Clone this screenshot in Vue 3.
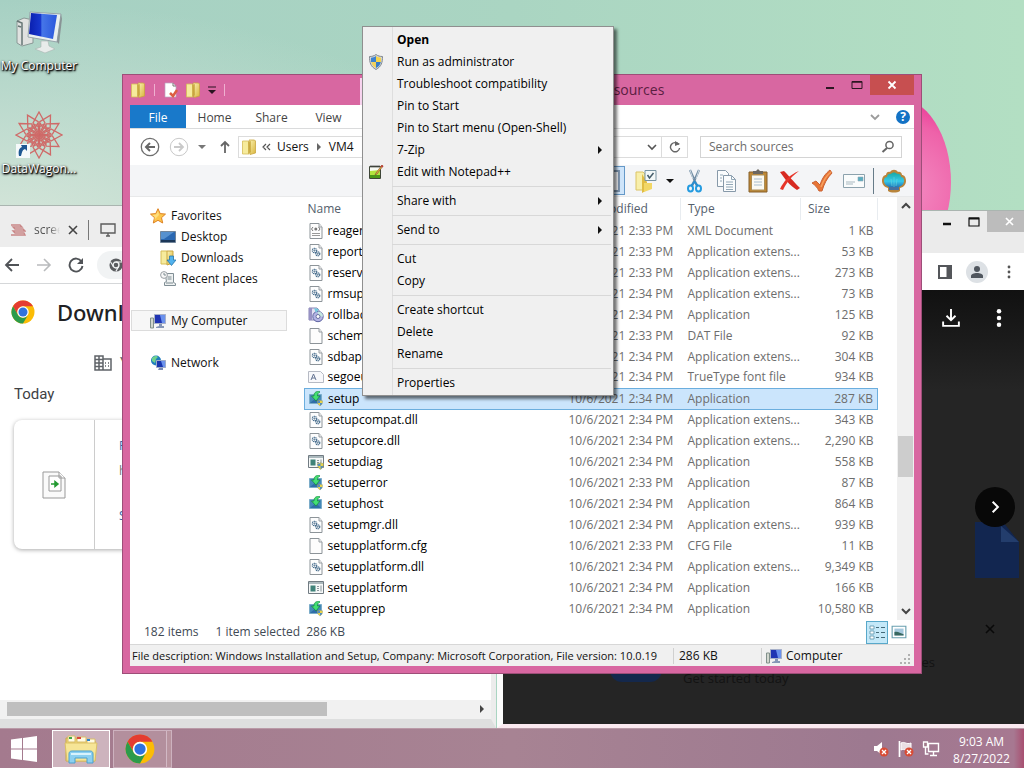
<script setup>
const files = [
  ['xml', 'reagent.xml', '10/6/2021 2:33 PM', 'XML Document', '1 KB'],
  ['dll', 'reportgen.dll', '10/6/2021 2:33 PM', 'Application extens...', '53 KB'],
  ['dll', 'reserve.dll', '10/6/2021 2:33 PM', 'Application extens...', '273 KB'],
  ['dll', 'rmsupport.dll', '10/6/2021 2:34 PM', 'Application extens...', '73 KB'],
  ['disc', 'rollback', '10/6/2021 2:34 PM', 'Application', '125 KB'],
  ['blank', 'schema.dat', '10/6/2021 2:33 PM', 'DAT File', '92 KB'],
  ['dll', 'sdbapi.dll', '10/6/2021 2:34 PM', 'Application extens...', '304 KB'],
  ['ttf', 'segoeui.ttf', '10/6/2021 2:34 PM', 'TrueType font file', '934 KB'],
  ['setup', 'setup', '10/6/2021 2:34 PM', 'Application', '287 KB'],
  ['dll', 'setupcompat.dll', '10/6/2021 2:34 PM', 'Application extens...', '343 KB'],
  ['dll', 'setupcore.dll', '10/6/2021 2:34 PM', 'Application extens...', '2,290 KB'],
  ['diag', 'setupdiag', '10/6/2021 2:34 PM', 'Application', '558 KB'],
  ['setup', 'setuperror', '10/6/2021 2:33 PM', 'Application', '87 KB'],
  ['host', 'setuphost', '10/6/2021 2:34 PM', 'Application', '864 KB'],
  ['dll', 'setupmgr.dll', '10/6/2021 2:34 PM', 'Application extens...', '939 KB'],
  ['blank', 'setupplatform.cfg', '10/6/2021 2:33 PM', 'CFG File', '11 KB'],
  ['dll', 'setupplatform.dll', '10/6/2021 2:34 PM', 'Application extens...', '9,349 KB'],
  ['app', 'setupplatform', '10/6/2021 2:34 PM', 'Application', '166 KB'],
  ['setup', 'setupprep', '10/6/2021 2:34 PM', 'Application', '10,580 KB']
]

const menu = [
  [
    { label: 'Open', bold: true },
    { label: 'Run as administrator', icon: 'shield' },
    { label: 'Troubleshoot compatibility' },
    { label: 'Pin to Start' },
    { label: 'Pin to Start menu (Open-Shell)' },
    { label: '7-Zip', sub: true },
    { label: 'Edit with Notepad++', icon: 'notepad' }
  ],
  [{ label: 'Share with', sub: true }],
  [{ label: 'Send to', sub: true }],
  [{ label: 'Cut' }, { label: 'Copy' }],
  [{ label: 'Create shortcut' }, { label: 'Delete' }, { label: 'Rename' }],
  [{ label: 'Properties' }]
]

const tools = [
  ['scissors', 'Cut'],
  ['copy', 'Copy'],
  ['paste', 'Paste'],
  ['cross', 'Delete'],
  ['tick', 'Rename'],
  ['mail', 'Send']
]
const petals = [0, 30, 60, 90, 120, 150, 180, 210, 240, 270, 300, 330]
</script>

<template>
  <svg class="defs" aria-hidden="true">
    <defs>
      <linearGradient id="gFold" x1="0" x2="1" y1="0" y2="1"><stop offset="0" stop-color="#fbf3b4" /><stop offset="1" stop-color="#d9b53c" /></linearGradient>
      <linearGradient id="gScreen" x1="0" x2="1"><stop offset="0" stop-color="#0a1fae" /><stop offset=".42" stop-color="#1838cf" /><stop offset=".46" stop-color="#4676e8" /><stop offset="1" stop-color="#2a57dc" /></linearGradient>
      <linearGradient id="gShell" x1="0" x2="0" y1="0" y2="1"><stop offset="0" stop-color="#18a9a4" /><stop offset=".6" stop-color="#35c9ea" /><stop offset="1" stop-color="#2377b8" /></linearGradient>
    </defs>
    <symbol id="i-folder" viewBox="0 0 16 16">
      <path d="M1.500 2H7l1 1v12H1.500z" fill="#f6eb9c" stroke="#d6bd58" stroke-width=".8" />
      <path d="M8 1h5.500l1 1v12L9 15.500z" fill="url(#gFold)" stroke="#c9a640" stroke-width=".8" />
      <path d="M7 3v12l3-2V2z" fill="#c5a437" opacity=".7" />
    </symbol>
    <symbol id="i-folderwide" viewBox="0 0 22 24">
      <path d="M1 3h7l2 2v16H1z" fill="#f8efab" stroke="#dbc467" />
      <path d="M7 5l5 8v8l-5 3z" fill="#e1bd43" /><path d="M9 14h8v6l-8 3z" fill="#f2d766" />
      <path d="M10 1.500h11v10H10z" fill="#f3f8f8" stroke="#7894a2" />
      <path d="M12.500 6l2 3 4-5" fill="none" stroke="#455d6a" stroke-width="1.500" />
    </symbol>
    <symbol id="i-newdoc" viewBox="0 0 16 16">
      <path d="M2 1h8l3 3v11H2z" fill="#fff" stroke="#b9a7c0" stroke-width=".7" /><path d="M10 1v3h3" fill="none" stroke="#777" /><path d="M7 11l3 3 4-6" fill="none" stroke="#dd5d42" stroke-width="2.500" />
    </symbol>
    <symbol id="i-blank" viewBox="0 0 16 16"><path d="M2 .5h9L14 4v11.500H2z" fill="#fdfdfd" stroke="#8d9499" /><path d="M11 .5V4h3" fill="#eee" stroke="#9aa0a5" /></symbol>
    <symbol id="i-xml" viewBox="0 0 16 16"><use href="#i-blank" /><path d="M5 4L3.500 6 5 8M10.500 4L12 6l-1.500 2" fill="none" stroke="#777" /><circle cx="7.800" cy="6" r="1.500" fill="#777" /><path d="M4 10.500h8M4 12.500h8" stroke="#999" /></symbol>
    <symbol id="i-dll" viewBox="0 0 16 16"><use href="#i-blank" /><g fill="none" stroke="#476d8d"><circle cx="6.500" cy="6.500" r="2.200" stroke-width="1.200" stroke-dasharray="1.200 .5" /><circle cx="6.500" cy="6.500" r=".6" /><circle cx="9.800" cy="9.800" r="2" stroke-width="1.200" stroke-dasharray="1.200 .5" /><circle cx="9.800" cy="9.800" r=".5" /></g></symbol>
    <symbol id="i-disc" viewBox="0 0 16 16"><path d="M1 1h8l2 2v10H1z" fill="#e2e0f2" stroke="#8682b4" /><path d="M1 1h3v12H1z" fill="#9792c4" /><circle cx="10" cy="9.500" r="5.200" fill="#b4b4e4" stroke="#5f65a2" /><path d="M10 4.500a5 5 0 0 1 5 5h-5z" fill="#c3e7df" /><circle cx="10" cy="9.500" r="2" fill="#fff" stroke="#6870a2" /><path d="M6 1l5 1-3 4z" fill="#76c8dc" /></symbol>
    <symbol id="i-ttf" viewBox="0 0 16 16"><path d="M.5 2.500h12l3 3v8H.5z" fill="#f8f8fb" stroke="#b6bac4" /><path d="M3 11l2.500-6L8 11M4 9h3" fill="none" stroke="#657492" /></symbol>
    <symbol id="i-minishield" viewBox="0 0 8 8"><path d="M4 0C3 1 2 1 .5 1c0 3 .5 5 3.500 7C7 6 7.500 4 7.500 1 6 1 5 1 4 0z" fill="#e9d44a" stroke="#898d70" stroke-width=".5" /><path d="M4 .5C3 1.300 2 1.400 1 1.500V4h3zM4 4h3C6.500 6 5.500 6.800 4 7.500z" fill="#528dbf" /></symbol>
    <symbol id="i-host" viewBox="0 0 16 16"><path d="M1.500 3.500h12v9h-12z" fill="#4689b9" stroke="#7bacc9" /><path d="M2 12h11L8 7z" fill="#2f6ea8" /><path d="M10.500 0C7 1 6 2 6 5H3.500L8 10l4-5H9.500c0-2 .4-3 2.500-4z" fill="#43df74" stroke="#16843c" stroke-width=".7" /></symbol>
    <symbol id="i-setup" viewBox="0 0 16 16"><use href="#i-host" /><use href="#i-minishield" x="9" y="8" width="6" height="8" /></symbol>
    <symbol id="i-app" viewBox="0 0 16 16"><path d="M.5 1.500h15v12H.5z" fill="#f6f8f8" stroke="#717b82" /><path d="M1 2h14v2H1z" fill="#abb9bd" /><path d="M2.500 5.500h5v6h-5z" fill="#3f8279" /><path d="M9 6.500h2M9 8.500h2M9 10.500h2M13 5.500v6" stroke="#8b979d" /></symbol>
    <symbol id="i-diag" viewBox="0 0 16 16"><use href="#i-app" /><use href="#i-minishield" x="9" y="8" width="7" height="8" /></symbol>
    <symbol id="i-shield" viewBox="0 0 16 16"><path d="M8 .5C6 2 4 2.500 1.500 2.500c0 6 1 10 6.500 13 5.500-3 6.500-7 6.500-13C12 2.500 10 2 8 .5z" fill="#d4d8da" stroke="#828990" /><path d="M8 2C6.500 3 5 3.500 3 3.700V8h5z" fill="#3c82cf" /><path d="M8 2c1.500 1 3 1.500 5 1.700V8H8z" fill="#f5d44b" /><path d="M3.200 8H8v6c-3-1.500-4.300-3.500-4.800-6z" fill="#f2d15d" /><path d="M12.800 8H8v6c3-1.500 4.300-3.500 4.800-6z" fill="#397cc6" /></symbol>
    <symbol id="i-notepad" viewBox="0 0 16 16"><path d="M1.500 2.500h11v12h-11z" fill="#f8fbf3" stroke="#3e4638" /><path d="M2 7l10-1v8H2z" fill="#b3e43e" /><path d="M2 11h10v3H2z" fill="#4b9818" /><path d="M3 1v3M5 1v3M7 1v3M9 1v3M11 1v3" stroke="#444" stroke-width=".7" /><path d="M14 1L8 9l-1 2 2-1 6-8z" fill="#eab046" stroke="#7a4a29" stroke-width=".6" /><path d="M13.500 1l2 1-1 1.400-2-1z" fill="#bf3f3c" /></symbol>
    <symbol id="i-pc" viewBox="0 0 48 44"><path d="M2 11l7-3 9 2v23L7 36l-5-3z" fill="#e0e2e0" stroke="#8a9896" /><path d="M2 11l5 2v22M3 16l3 1" fill="none" stroke="#667775" stroke-width="1.500" /><path d="M15 2l31 2-4 28-29-5z" fill="#e9efef" stroke="#97a5aa" /><path d="M16 3l26 2-4 24-24-5z" fill="url(#gScreen)" /><path d="M26 31h7l1 5 6 3-10 4-10-4 6-2z" fill="#e8ecea" stroke="#a9b6b2" stroke-width=".6" /><path d="M42 32l4-28 1 5-3 25z" fill="#899496" /></symbol>
    <symbol id="i-smallpc" viewBox="0 0 16 16"><path d="M.5 5h3v10h-3z" fill="#d2d7ce" stroke="#81908b" /><path d="M4.500 1.500h11v9h-11z" fill="#1f34b3" stroke="#a7b0c9" /><path d="M10 2h5v8h-3z" fill="#6a91ed" /><path d="M9 11h3v2h2v2H6v-1l3-1z" fill="#8596b6" /></symbol>
    <symbol id="i-star" viewBox="0 0 16 16"><path d="M8 .7l2.200 4.900 5.300.5-4 3.600 1.200 5.300L8 12.300 3.300 15l1.200-5.300-4-3.600 5.300-.5z" fill="#fdc64b" stroke="#de8223" /><path d="M8 3l1 4-5 5 1-3-3-2 4-.500z" fill="#ffe388" opacity=".8" /></symbol>
    <symbol id="i-desk" viewBox="0 0 16 16"><path d="M.5 2.500h15v11H.5z" fill="#2a68b2" stroke="#71859a" /><path d="M1 3h13L4 10H1z" fill="#6aa3db" opacity=".7" /><path d="M1 12h14" stroke="#1b3758" stroke-width="2" /></symbol>
    <symbol id="i-down" viewBox="0 0 16 16"><path d="M1 1h6l1 1v12H1z" fill="#f6eb9c" stroke="#d6bd58" /><path d="M7 1h6v12l-6 2z" fill="url(#gFold)" stroke="#c9a640" /><path d="M9.500 6h4v4H16l-4.500 5.500L7 10h2.500z" fill="#51b2ee" stroke="#2676ac" stroke-width=".8" /></symbol>
    <symbol id="i-recent" viewBox="0 0 16 16"><path d="M5 2.500h8.500v9l2 1v2h-11v-3l2-1z" fill="#eef1f1" stroke="#808e95" /><circle cx="4" cy="4" r="3.400" fill="#f7f7f7" stroke="#999fa4" /><path d="M4 2v2h2M7.500 6h4M7.500 8h4M6 12h7" fill="none" stroke="#7d8b91" /></symbol>
    <symbol id="i-net" viewBox="0 0 16 16"><circle cx="6" cy="5.500" r="5" fill="#1f7dbd" /><path d="M2 3c3-3 5-2 6-1L6 4 5 8 2 6z" fill="#6fd18d" /><path d="M6.500 5.500h9v7h-9z" fill="#1835ae" stroke="#9dabc8" /><path d="M11 6h4v6h-2z" fill="#6c93ed" /><path d="M9 13h4v2H8z" fill="#7b8cb4" /></symbol>
    <symbol id="i-chrome" viewBox="0 0 48 48"><circle cx="24" cy="24" r="23" fill="#fbbc05" /><path d="M4.080 12.500A23 23 0 0 1 43.920 12.500H24A11.500 11.500 0 0 0 14.040 29.750z" fill="#e43c32" /><path d="M4.080 12.500A23 23 0 0 0 24 47l9.960-17.250A11.500 11.500 0 0 1 14.040 29.750z" fill="#2c9b4b" /><circle cx="24" cy="24" r="11.500" fill="#fff" /><circle cx="24" cy="24" r="9" fill="#2f72de" /></symbol>
    <symbol id="i-scissors" viewBox="0 0 24 24"><path d="M8 1l7 16M17 1l-7 16" stroke="#728da4" stroke-width="2.200" /><path d="M8 1l3 9M17 1l-3 9" stroke="#cad7df" /><g fill="none" stroke="#249be0" stroke-width="2"><ellipse cx="8.500" cy="19.500" rx="2.500" ry="3" /><ellipse cx="16.500" cy="19.500" rx="2.500" ry="3" /></g><path d="M12 12l4 5M13 12l-4 5" stroke="#2a8ed0" stroke-width="2" /></symbol>
    <symbol id="i-copy" viewBox="0 0 24 24"><g fill="#fafcfd" stroke="#8799a9"><path d="M3.500 1.500h8l3 3v13h-11z" /><path d="M9.500 6.500h8l4 4v12h-12z" /></g><path d="M17.500 6.500v4h4M6 6h3M6 9h2M6 12h2M12 13h7M12 15.500h7M12 18h7M12 20.500h7" fill="none" stroke="#93a8b7" /></symbol>
    <symbol id="i-paste" viewBox="0 0 24 24"><path d="M3 3h18v20H3z" fill="#c08834" stroke="#85602c" /><path d="M5.500 6h13v15h-13z" fill="#fbfaf3" stroke="#a98d56" /><path d="M7 5h10V2h-3l-2-2-2 2H7z" fill="#6d6860" /><path d="M8 10h8M8 13h8M8 16h8" stroke="#a7bdce" /></symbol>
    <symbol id="i-cross" viewBox="0 0 24 24"><path d="M2 3l4-1c4 4 9 10 16 17l-3 2C11 16 7 10 2 3z" fill="#d72a21" /><path d="M21 2c-7 5-12 11-16 19l-3-1C6 12 11 6 21 2z" fill="#e7352a" /></symbol>
    <symbol id="i-tick" viewBox="0 0 24 24"><path d="M2 14l4-2 4 4C12 9 16 4 20 1l2 3c-5 5-8 11-10 18H9C7 18 5 16 2 14z" fill="#e87536" stroke="#ca6232" /><path d="M11 18C14 10 17 6 21 3" fill="none" stroke="#f6a160" stroke-width="1.500" /></symbol>
    <symbol id="i-mail" viewBox="0 0 24 24"><path d="M1.500 5.500h21v13h-21z" fill="#fafcfc" stroke="#8ca2ad" /><path d="M16 8h5v4h-5z" fill="#59aec0" stroke="#91a5b5" stroke-width=".6" /><path d="M4 13h9M4 15h7" stroke="#a8b8c0" /></symbol>
    <symbol id="i-shell" viewBox="0 0 24 24"><path d="M6 19C2 18 0 15 0 12c0-4 2-6 4-6 0-3 3-4 4-3 2-3 6-3 8 0 2-1 4 1 4 3 2 0 4 2 4 6 0 3-2 6-6 7v3c-3 2-9 2-12 0z" fill="#b8843b" /><path d="M7 18c-3-1-5-3-5-6s1-4 3-4c0-2 2-4 4-3 1-2 5-2 6 0 2-1 4 1 4 3 2 0 3 1 3 4s-2 5-5 6z" fill="url(#gShell)" /><path d="M12 18V8M10 17L9 10M14 17l1-7" stroke="#67d5db" stroke-width=".6" /><path d="M7 18h10v3H7z" fill="#4770a0" /></symbol>
    <symbol id="i-pages" viewBox="0 0 24 24"><path d="M1 2h20v20H1z" fill="#fafcff" stroke="#7e96b0" stroke-width="2" /><path d="M15 5v15" stroke="#7e96b0" /></symbol>
  </svg>

  <main class="screen">
    <section class="desktop">
      <div class="flower"></div>

      <nav class="shortcuts" aria-label="Desktop icons">
        <a href="#" class="shortcut">
          <svg class="sc-art" viewBox="0 0 48 44"><use href="#i-pc" /></svg>
          <span>My Computer</span>
        </a>
        <a href="#" class="shortcut">
          <svg class="sc-art" viewBox="0 0 48 48">
            <g fill="none" stroke="#cf6a68" stroke-width="1.300">
              <path v-for="p in petals" :key="p" d="M24 1l6 11-6 11-6-11zM24 16l5-3M24 16l-5-3" :transform="'rotate(' + p + ' 24 24)'" />
              <circle cx="24" cy="24" r="6" stroke-dasharray="2 1" />
            </g>
            <path d="M1 33h14v14H1z" fill="#f5f9fa" /><path d="M4 45c-1-5 0-8 3-9l-1-2 6 0 0 6-2-2c-3 1-3 4-4 7z" fill="#1d5792" />
          </svg>
          <span>DataWagon...</span>
        </a>
      </nav>

      <section class="browser left" aria-label="Downloads browser">
        <div class="b-tabs">
          <svg class="fav" viewBox="0 0 16 14"><path d="M1 2h9l2 2H3l2 2h8l2 2H3l2 2h9l1 2H1" fill="none" stroke="#c98787" stroke-width="1.300" /></svg>
          <span class="tabname">scree</span>
          <button aria-label="Close tab"><svg viewBox="0 0 12 12"><path d="M2 2l8 8M10 2l-8 8" stroke="#444" stroke-width="1.600" /></svg></button>
          <i class="tabsep"></i>
          <svg class="mon" viewBox="0 0 16 16"><path d="M1 2h14v9H1zM8 11v3M6 14h4" fill="none" stroke="#5c5c5c" stroke-width="1.400" /></svg>
        </div>
        <div class="b-bar">
          <button aria-label="Back"><svg viewBox="0 0 16 16"><path d="M15 8H2M8 2L2 8l6 6" fill="none" stroke="#505357" stroke-width="1.800" /></svg></button>
          <button aria-label="Forward"><svg viewBox="0 0 16 16"><path d="M1 8h13M8 2l6 6-6 6" fill="none" stroke="#b9bbbd" stroke-width="1.600" /></svg></button>
          <button aria-label="Reload"><svg viewBox="0 0 16 16"><path d="M13.500 4.500A6.500 6.500 0 1 0 14.500 9" fill="none" stroke="#505357" stroke-width="1.900" /><path d="M15 1v6H9z" fill="#505357" /></svg></button>
          <div class="omni"><svg viewBox="0 0 16 16"><circle cx="8" cy="8" r="7.500" fill="#5b5d60" /><circle cx="8" cy="8" r="3.400" fill="#5b5d60" stroke="#f1f3f4" stroke-width="1.600" /><path d="M8 4.600h7M5 9.700L1.500 4M11 9.700L8 15" stroke="#f1f3f4" stroke-width="1.300" /></svg></div>
        </div>
        <div class="b-page">
          <h1><svg viewBox="0 0 48 48"><use href="#i-chrome" /></svg>Downloads</h1>
          <p class="managed"><svg viewBox="0 0 18 16"><path d="M1 1h8v14H1zM9 4h8v11H9" fill="none" stroke="#5f6368" stroke-width="1.500" /><path d="M1 4.500h8M1 8h8M1 11.500h8M5 1v14M11 8h1M14 8h1M11 11h1M14 11h1" stroke="#5f6368" stroke-width="1.500" /></svg>Your browser</p>
          <h2>Today</h2>
          <article class="card">
            <div class="thumb"><svg viewBox="0 0 24 28"><path d="M1 1h16l6 6v20H1z" fill="#fafafa" stroke="#999" /><path d="M17 1v6h6M7 5h12v15H7z" fill="#fff" stroke="#9a9a9a" /><path d="M9 13h5M13 10.500l3 2.500-3 2.500z" stroke="#239a32" stroke-width="1.500" fill="#239a32" /></svg></div>
            <div class="dl"><a href="#">Files</a><span>https</span><a href="#">Show</a></div>
          </article>
        </div>
        <div class="hscroll"><div class="hthumb"></div><svg viewBox="0 0 8 8"><path d="M2 0l4 4-4 4z" fill="#444" /></svg></div>
      </section>

      <section class="browser right" aria-label="Image viewer browser">
        <div class="r-title">
          <button aria-label="Minimize"><svg viewBox="0 0 12 12"><path d="M2 8h8" stroke="#111" stroke-width="2.500" /></svg></button>
          <button aria-label="Maximize"><svg viewBox="0 0 12 12"><path d="M1 2h10v8H1z" fill="none" stroke="#111" stroke-width="1.200" /><path d="M1 2.500h10" stroke="#111" stroke-width="2" /></svg></button>
          <button class="gray" aria-label="Close"><svg viewBox="0 0 12 12"><path d="M2 2l7 7M9 2L2 9" stroke="#fff" stroke-width="1.700" /></svg></button>
        </div>
        <div class="r-bar">
          <svg viewBox="0 0 16 16"><path d="M2 2h12v12H2z" fill="none" stroke="#54565a" stroke-width="2" /><path d="M9.500 2H14v12H9.500z" fill="#54565a" /></svg>
          <span class="avatar"><svg viewBox="0 0 16 16"><circle cx="8" cy="5" r="3" fill="#50565e" /><path d="M2 14v-2c0-4 12-4 12 0v2z" fill="#50565e" /></svg></span>
          <svg viewBox="0 0 16 16"><circle cx="8" cy="3" r="1.400" fill="#555" /><circle cx="8" cy="8" r="1.400" fill="#555" /><circle cx="8" cy="13" r="1.400" fill="#555" /></svg>
        </div>
        <div class="r-view">
          <div class="r-acts">
            <svg viewBox="0 0 16 16"><path d="M8 0v9M4 6l4 4 4-4M1 11v4h14v-4" fill="none" stroke="#fff" stroke-width="1.700" /></svg>
            <svg viewBox="0 0 16 16"><circle cx="8" cy="2" r="2" fill="#fff" /><circle cx="8" cy="8" r="2" fill="#fff" /><circle cx="8" cy="14" r="2" fill="#fff" /></svg>
          </div>
          <svg class="r-doc" viewBox="0 0 44 56"><path d="M0 0h28l16 20v36H0z" fill="#122650" /><path d="M26 4l18 16H26z" fill="#233d6c" /></svg>
          <button class="next" aria-label="Next"><svg viewBox="0 0 12 12"><path d="M4 1.500l4.500 4.500L4 10.500" fill="none" stroke="#fff" stroke-width="1.700" /></svg></button>
          <svg class="r-x" viewBox="0 0 10 10"><path d="M1 1l8 8M9 1L1 9" stroke="#090909" stroke-width="1.600" /></svg>
          <div class="pill"></div>
          <div class="promo"><p>files</p><p>Get started today</p></div>
        </div>
      </section>

      <section class="explorer" aria-label="sources">
        <header class="titlebar">
          <div class="quick">
            <svg viewBox="0 0 16 16"><use href="#i-folder" /></svg><i></i>
            <button aria-label="Properties"><svg viewBox="0 0 16 16"><use href="#i-newdoc" /></svg></button>
            <button aria-label="New folder"><svg viewBox="0 0 16 16"><use href="#i-folder" /></svg></button>
            <button class="qdrop" aria-label="Customize"><svg viewBox="0 0 8 8"><path d="M0 1h8" stroke="#291321" /><path d="M0 4h8L4 8z" fill="#291321" /></svg></button><i></i>
          </div>
          <div class="ctxtab"></div>
          <span class="title">sources</span>
          <div class="wbtns">
            <button aria-label="Minimize"><svg viewBox="0 0 12 12"><path d="M2 9h8" stroke="#2d1722" stroke-width="2" /></svg></button>
            <button aria-label="Maximize"><svg viewBox="0 0 12 12"><path d="M1 2.500h10v7H1z" fill="none" stroke="#2d1722" /><path d="M1 3h10" stroke="#2d1722" stroke-width="1.500" /></svg></button>
            <button class="close" aria-label="Close"><svg viewBox="0 0 12 12"><path d="M2.500 2.500l7 7M9.500 2.500l-7 7" stroke="#fff" stroke-width="1.800" /></svg></button>
          </div>
        </header>
        <div class="inner">
          <div class="ribbon">
            <button class="file">File</button><button>Home</button><button>Share</button><button>View</button>
            <div class="rhelp">
              <svg viewBox="0 0 10 10"><path d="M1 3l4 4 4-4" fill="none" stroke="#9b9b9b" stroke-width="1.800" /></svg>
              <button class="help" aria-label="Help">?</button>
            </div>
          </div>
          <div class="address">
            <button aria-label="Back" class="nav"><svg viewBox="0 0 20 20"><circle cx="10" cy="10" r="8.700" fill="none" stroke="#6e6e6e" stroke-width="1.300" /><path d="M15 10H6M10 6l-4 4 4 4" fill="none" stroke="#666" stroke-width="2" /></svg></button>
            <button aria-label="Forward" class="nav"><svg viewBox="0 0 20 20"><circle cx="10" cy="10" r="8.700" fill="none" stroke="#c9c9c9" /><path d="M5 10h9M10 6l4 4-4 4" fill="none" stroke="#c9c9c9" stroke-width="1.800" /></svg></button>
            <svg class="navdrop" viewBox="0 0 8 8"><path d="M0 2h8L4 6z" fill="#777" /></svg>
            <button aria-label="Up" class="up"><svg viewBox="0 0 14 14"><path d="M7 13V2M3 6l4-4 4 4" fill="none" stroke="#666" stroke-width="1.800" /></svg></button>
            <div class="crumbs">
              <svg class="cf" viewBox="0 0 16 16"><use href="#i-folder" /></svg>
              <svg class="dbl" viewBox="0 0 10 10"><path d="M4 2L1 5l3 3M8 2L5 5l3 3" fill="none" stroke="#555" stroke-width="1.200" /></svg>
              <a href="#">Users</a>
              <svg class="tri" viewBox="0 0 6 8"><path d="M1 0l4 4-4 4z" fill="#666" /></svg>
              <a href="#">VM4</a>
              <svg class="chev" viewBox="0 0 10 10"><path d="M1 3l4 4 4-4" fill="none" stroke="#555" stroke-width="1.600" /></svg>
              <button class="refresh" aria-label="Refresh"><svg viewBox="0 0 12 12"><path d="M9.800 3.500A4.600 4.600 0 1 0 10.600 7" fill="none" stroke="#666" stroke-width="1.400" /><path d="M6 0l5 3-5 2z" fill="#666" /></svg></button>
            </div>
            <label class="search"><input type="text" placeholder="Search sources" aria-label="Search sources" /><svg viewBox="0 0 14 14"><circle cx="8.500" cy="5" r="3.600" fill="none" stroke="#666" stroke-width="1.500" /><path d="M6 8l-4.500 4" stroke="#666" stroke-width="2" /></svg></label>
          </div>
          <div class="toolbar">
            <button class="pane" aria-label="Navigation pane"><svg viewBox="0 0 24 24"><use href="#i-pages" /></svg></button>
            <button class="tool" aria-label="Options"><svg viewBox="0 0 22 24"><use href="#i-folderwide" /></svg></button>
            <svg class="tdrop" viewBox="0 0 8 8"><path d="M0 2h8L4 6z" fill="#111" /></svg>
            <button v-for="t in tools" :key="t[0]" class="tool" :aria-label="t[1]"><svg viewBox="0 0 24 24"><use :href="'#i-' + t[0]" /></svg></button>
            <i class="tsep"></i>
            <button class="tool" aria-label="Open-Shell"><svg viewBox="0 0 24 24"><use href="#i-shell" /></svg></button>
          </div>
          <div class="panes">
            <nav class="tree" aria-label="Folders">
              <a href="#"><svg viewBox="0 0 16 16"><use href="#i-star" /></svg>Favorites</a>
              <a href="#" class="kid"><svg viewBox="0 0 16 16"><use href="#i-desk" /></svg>Desktop</a>
              <a href="#" class="kid"><svg viewBox="0 0 16 16"><use href="#i-down" /></svg>Downloads</a>
              <a href="#" class="kid"><svg viewBox="0 0 16 16"><use href="#i-recent" /></svg>Recent places</a>
              <a href="#" class="group current"><svg viewBox="0 0 16 16"><use href="#i-smallpc" /></svg>My Computer</a>
              <a href="#" class="group"><svg viewBox="0 0 16 16"><use href="#i-net" /></svg>Network</a>
            </nav>
            <div class="list">
              <table>
                <colgroup><col /><col class="c-date" /><col class="c-type" /><col class="c-size" /></colgroup>
                <thead><tr><th>Name</th><th>Date modified</th><th>Type</th><th>Size</th></tr></thead>
                <tbody>
                  <tr v-for="f in files" :key="f[1]" :class="{ sel: f[1] === 'setup' }">
                    <td class="name"><div><svg viewBox="0 0 16 16"><use :href="'#i-' + f[0]" /></svg>{{ f[1] }}</div></td>
                    <td>{{ f[2] }}</td><td>{{ f[3] }}</td><td class="size">{{ f[4] }}</td>
                  </tr>
                </tbody>
              </table>
            </div>
            <div class="vscroll">
              <svg viewBox="0 0 10 10"><path d="M1 7l4-4 4 4" fill="none" stroke="#444" stroke-width="2" /></svg>
              <div class="track"><div class="vthumb"></div></div>
              <svg viewBox="0 0 10 10"><path d="M1 3l4 4 4-4" fill="none" stroke="#444" stroke-width="2" /></svg>
            </div>
          </div>
          <div class="status">
            <span class="count">182 items</span><span>1 item selected</span><span class="kb">286 KB</span>
            <div class="views">
              <button class="on" aria-label="Details"><svg viewBox="0 0 16 16"><path d="M1 2h4v3H1zM1 7h4v3H1zM1 12h4v3H1z" fill="#fff" stroke="#5a92a8" stroke-width=".8" /><path d="M7 3.500h3M12 3.500h4M7 8.500h3M12 8.500h4M7 13.500h3M12 13.500h4" stroke="#456a78" /></svg></button>
              <button aria-label="Thumbnails"><svg viewBox="0 0 14 14"><path d="M1 2h12v10H1z" fill="#fff" stroke="#69a0b0" /><path d="M3 4h8v6H3z" fill="#a5c8dd" /><path d="M3 7c3-1 5 1 8 2v1H3z" fill="#37675f" /></svg></button>
            </div>
          </div>
          <footer class="info">
            <span class="desc">File description: Windows Installation and Setup, Company: Microsoft Corporation, File version: 10.0.19</span>
            <span class="isize">286 KB</span>
            <span class="iloc"><svg viewBox="0 0 16 16"><use href="#i-smallpc" /></svg>Computer</span>
            <svg class="grip" viewBox="0 0 10 10"><path d="M8 0h2v2H8zM8 4h2v2H8zM8 8h2v2H8zM4 4h2v2H4zM4 8h2v2H4zM0 8h2v2H0z" fill="#b0b0b0" /></svg>
          </footer>
        </div>
      </section>

      <div class="menu" role="menu">
        <div v-for="(g, i) in menu" :key="i" class="mgroup">
          <button v-for="m in g" :key="m.label" role="menuitem" :class="{ bold: m.bold }">
            <span class="mi"><svg v-if="m.icon" viewBox="0 0 16 16"><use :href="'#i-' + m.icon" /></svg></span>
            <span class="ml">{{ m.label }}</span>
            <svg v-if="m.sub" class="marrow" viewBox="0 0 6 8"><path d="M1 0l4 4-4 4z" fill="#111" /></svg>
          </button>
        </div>
      </div>
    </section>

    <footer class="taskbar">
      <button class="start" aria-label="Start"><svg viewBox="0 0 28 28"><path d="M1 4.500l11-1.500v10.500H1zM13 3l14-2v12.500H13zM1 14.500h11V25L1 23.500zM13 14.500h14V27l-14-2z" fill="#fff" /></svg></button>
      <button class="task active" aria-label="File Explorer">
        <svg viewBox="0 0 34 30"><path d="M2 4h10l2 3h17v20H2z" fill="#eed672" stroke="#c9a64d" /><path d="M4 2h7v6H4zM13 3h9v5h-9zM23 5h8v5h-8z" fill="#fffbe3" stroke="#d9bd69" /><path d="M5 3h3v2H5z" fill="#3ca749" /><path d="M13 3h4v2h-4z" fill="#d9463a" /><path d="M23 5h3v2h-3z" fill="#2a85ce" /><path d="M1 9h32l-2 18H3z" fill="#f6e596" stroke="#dbc067" /><path d="M5 29V20c0-2 1-3 3-3h18c2 0 3 1 3 3v9h-6v-5H11v5z" fill="#8cd0f0" stroke="#4ba0cf" /><path d="M7 20h20" stroke="#d8f3fd" stroke-width="2" /></svg>
      </button>
      <button class="task stack" aria-label="Google Chrome"><svg viewBox="0 0 48 48"><use href="#i-chrome" /></svg></button>
      <div class="tray">
        <svg viewBox="0 0 18 18"><path d="M2 6h3l5-4v13l-5-4H2z" fill="#fff" /><circle cx="12" cy="12" r="4.500" fill="#d84c36" /><path d="M10 10l4 4M14 10l-4 4" stroke="#fff" stroke-width="1.300" /></svg>
        <svg viewBox="0 0 18 18"><path d="M2.500 1v16" stroke="#fff" stroke-width="1.700" /><path d="M4 3c4-2 5 2 10 0v7c-5 2-6-2-10 0z" fill="#eadfe4" stroke="#fff" /><circle cx="12" cy="12" r="4.500" fill="#d84c36" /><path d="M10 10l4 4M14 10l-4 4" stroke="#fff" stroke-width="1.300" /></svg>
        <svg viewBox="0 0 18 18"><path d="M6.500 3.500h10v8h-10zM11.500 12v3M8 15.500h7M3.500 7v7h3" fill="none" stroke="#fff" stroke-width="1.400" /><path d="M1.500 2h4v5h-4z" fill="#a27c8c" stroke="#fff" stroke-width="1.300" /></svg>
      </div>
      <time class="clock"><span>9:03 AM</span><span>8/27/2022</span></time>
    </footer>
  </main>
</template>

<style>
body { margin: 0; }
</style>

<style scoped>
.defs { position: absolute; width: 0; height: 0; }
.screen { height: 100vh; min-height: 768px; display: flex; flex-direction: column; overflow: hidden; font: 12px/16px "Open Sans", "Noto Sans", sans-serif; color: #111; }
.screen * { box-sizing: border-box; }
button { border: 0; background: none; padding: 0; margin: 0; font: inherit; color: inherit; display: flex; align-items: center; justify-content: center; }
a { color: inherit; text-decoration: none; }
svg { display: block; flex: none; }
.desktop { flex: 1; position: relative; overflow: hidden; background: radial-gradient(ellipse 520px 230px at 0 230px, #d6e6da 0, rgba(214, 230, 218, 0) 100%), linear-gradient(90deg, #a6d0c3, #aad5c2 50%, #b3dfc3); }
.flower { position: absolute; right: 73px; top: 97px; width: 110px; height: 170px; border-radius: 50%; background: radial-gradient(circle at 55% 55%, #f48fc4 0, #ee62a9 60%, #ec479d 75%, #f27ebb 100%); }
.shortcuts { position: absolute; left: 0; top: 8px; display: flex; flex-direction: column; gap: 37px; }
.shortcut { width: 78px; display: flex; flex-direction: column; align-items: center; gap: 2px; color: #fff; text-shadow: 1px 1px 2px #000, 0 1px 3px #000, 1px 1px 1px #222; white-space: nowrap; }
.shortcut svg { width: 48px; height: 48px; }

.browser { position: absolute; overflow: hidden; display: flex; flex-direction: column; }
.left { left: 0; top: 205px; bottom: 0; width: 496px; background: #fff; border-right: 5px solid #ececec; border-bottom: 9px solid #dedfdf; border-top: 1px solid #aab5b0; }
.b-tabs { height: 41px; flex: none; background: #ededed; display: flex; align-items: center; padding: 7px 0 0 10px; color: #555; }
.fav { width: 16px; height: 14px; }
.tabname { width: 26px; margin: 0 7px 0 8px; overflow: hidden; mask-image: linear-gradient(90deg, #000 60%, transparent); }
.b-tabs button svg { width: 12px; height: 12px; }
.tabsep { width: 1px; height: 20px; background: #777; margin: 0 11px 0 9px; }
.mon { width: 16px; height: 16px; }
.b-bar { height: 37px; flex: none; border-bottom: 1px solid #d5d7d9; display: flex; align-items: center; padding-left: 4px; gap: 16px; }
.b-bar svg { width: 16px; height: 16px; }
.omni { flex: 1; height: 28px; border-radius: 14px; background: #f1f3f4; display: flex; align-items: center; padding-left: 12px; margin-left: -3px; }
.omni svg { width: 14px; height: 14px; }
.b-page { flex: 1; overflow: hidden; }
.b-page h1 { margin: 11px 0 0 11px; font: 500 22px/34px "Noto Sans", sans-serif; display: flex; align-items: center; gap: 22px; color: #202124; }
.b-page h1 svg { width: 24px; height: 24px; }
.managed { margin: 24px 0 0 94px; height: 20px; font: 14px/20px Roboto, sans-serif; display: flex; align-items: center; gap: 8px; color: #5f6368; white-space: nowrap; }
.managed svg { width: 18px; height: 16px; }
.b-page h2 { font: 15px/20px Roboto, sans-serif; margin: 11px 0 16px 14px; color: #3e4144; }
.card { margin-left: 14px; margin-right: -20px; height: 129px; border-radius: 8px; background: #fff; display: flex; box-shadow: 0 1px 4px #aaa; }
.thumb { width: 81px; border-right: 1px solid #ccc; display: flex; align-items: center; justify-content: center; }
.thumb svg { width: 24px; height: 28px; }
.dl { padding: 18px 0 0 24px; display: flex; flex-direction: column; gap: 9px; color: #777; }
.dl a { color: #3767a8; }
.dl a:last-child { margin-top: 20px; }
.hscroll { height: 19px; flex: none; background: #f1f1f1; padding: 1px 5px 2px 7px; display: flex; justify-content: space-between; align-items: center; }
.hthumb { width: 320px; height: 14px; background: #bfbfbf; }
.hscroll svg { width: 8px; height: 8px; }

.right { left: 497px; right: 0; top: 210px; bottom: 0; background: #f5f2f3; border-bottom: 4px solid #fbe9f0; border-left: 6px solid #fbfbfb; border-top: 1px solid #aab5b0; }
.r-title { height: 42px; background: #ebebeb; display: flex; justify-content: flex-end; align-items: flex-start; }
.r-title button { width: 27px; height: 21px; }
.r-title svg { width: 12px; height: 12px; }
.r-title .gray { width: 37px; background: #bcbcbc; padding-left: 9px; }
.r-bar { height: 37px; background: #fff; display: flex; justify-content: flex-end; align-items: center; gap: 13px; padding-right: 7px; }
.r-bar svg { width: 16px; height: 16px; }
.avatar { width: 22px; height: 22px; border-radius: 50%; background: #dde1e5; display: flex; align-items: center; justify-content: center; }
.r-view { flex: 1; position: relative; background: linear-gradient(#111, #252525 100px); }
.r-acts { display: flex; justify-content: flex-end; gap: 30px; padding: 19px 16px 0 0; }
.r-acts svg { width: 18px; height: 18px; }
.r-doc { position: absolute; right: 5px; top: 232px; width: 44px; height: 56px; }
.next { position: absolute; right: 9px; top: 197px; width: 40px; height: 40px; border-radius: 50%; background: #080808; }
.next svg { width: 14px; height: 14px; }
.r-x { position: absolute; right: 29px; top: 334px; width: 10px; height: 10px; }
.promo { position: absolute; left: 180px; right: 89px; top: 364px; color: #131313; font: 13px/16px "Open Sans", sans-serif; }
.promo p { margin: 0; }
.promo p:first-child { text-align: right; }
.pill { position: absolute; left: 107px; top: 352px; width: 52px; height: 40px; border-radius: 12px; background: #14284c; }

.explorer { position: absolute; left: 122px; right: 102px; top: 74px; bottom: 54px; background: #d867a1; border: 1px solid #9d4e78; padding: 0 7px 7px 7px; display: flex; flex-direction: column; overflow: hidden; }
.titlebar { height: 30px; flex: none; display: flex; align-items: flex-start; }
.quick { width: 230px; display: flex; align-items: center; height: 30px; }
.quick svg { width: 16px; height: 16px; }
.quick i { width: 1px; height: 12px; background: #efb0d0; margin: 0 8px 0 8px; }
.quick button + button { margin-left: 6px; }
.quick .qdrop svg { width: 8px; height: 8px; }
.quick .qdrop { margin-left: 7px; }
.ctxtab { width: 102px; height: 27px; margin-top: 3px; background: #f8d4ef; }
.title { flex: 1; text-align: center; font-size: 14px; line-height: 30px; color: #5a1e41; }
.wbtns { display: flex; }
.wbtns button { width: 27px; height: 20px; }
.wbtns svg { width: 12px; height: 12px; }
.wbtns .close { width: 44px; background: #c74f50; }
.inner { flex: 1; min-height: 0; background: #fff; display: flex; flex-direction: column; }
.ribbon { height: 24px; flex: none; display: flex; border-bottom: 1px solid #dadbdc; color: #444; }
.ribbon > button { width: 57px; padding-top: 2px; }
.ribbon .file { width: 56px; background: #1979ca; color: #fff; }
.rhelp { margin-left: auto; display: flex; align-items: center; gap: 16px; padding-right: 4px; }
.rhelp svg { width: 10px; height: 10px; }
.help { width: 14px; height: 14px; border-radius: 50%; background: #1372c5; color: #fff; font-weight: 700; }
.address { height: 36px; flex: none; display: flex; align-items: center; padding: 0 12px 0 10px; }
.nav { margin-right: 9px; }
.nav svg { width: 20px; height: 20px; }
.navdrop { width: 8px; height: 8px; margin-right: 12px; }
.up svg { width: 14px; height: 14px; }
.up { margin-right: 6px; }
.crumbs { flex: 1; height: 22px; border: 1px solid #dcdcdc; display: flex; align-items: center; padding-left: 2px; }
.cf { width: 16px; height: 16px; margin-right: 5px; }
.dbl { width: 10px; height: 10px; margin-right: 5px; }
.tri { width: 6px; height: 8px; margin: 0 7px; }
.chev { width: 10px; height: 10px; margin-left: auto; margin-right: 4px; }
.refresh { width: 26px; height: 20px; border-left: 1px solid #dcdcdc; }
.refresh svg { width: 12px; height: 12px; }
.search { width: 202px; height: 22px; margin-left: 12px; border: 1px solid #d4d4d4; display: flex; align-items: center; padding: 0 6px 0 8px; }
.search input { flex: 1; min-width: 0; border: 0; outline: 0; padding: 0; background: none; font: inherit; color: #666; }
.search input::placeholder { color: #6d6d6d; opacity: 1; }
.search svg { width: 14px; height: 14px; }
.toolbar { height: 32px; flex: none; background: #f4f5f7; border-bottom: 1px solid #e8e9ea; display: flex; align-items: center; justify-content: flex-end; padding-right: 4px; }
.pane { width: 30px; height: 29px; background: #cfe5fa; border: 1px solid #6599c8; margin-right: 5px; }
.tool { width: 32px; height: 29px; }
.toolbar svg { width: 24px; height: 24px; }
.toolbar .tdrop { width: 8px; height: 8px; margin: 0 4px; }
.tsep { width: 1px; height: 26px; background: #667b88; margin: 0 4px 0 3px; }
.panes { flex: 1; min-height: 0; display: flex; overflow: hidden; }
.tree { width: 166px; padding: 8px 9px 0 1px; }
.tree a { height: 21px; display: flex; align-items: center; gap: 5px; padding-left: 18px; border: 1px solid transparent; }
.tree svg { width: 16px; height: 16px; }
.tree .kid { padding-left: 28px; }
.tree .group { margin-top: 21px; }
.tree .current { background: #f7f7f7; border-color: #dcdcdc; }
.list { flex: 1; padding: 1px 19px 0 8px; }
table { width: 100%; border-collapse: collapse; table-layout: fixed; }
.c-date { width: 119px; }
.c-type { width: 120px; }
.c-size { width: 77px; }
th { height: 22px; padding: 0 0 0 7px; text-align: left; font-weight: 400; color: #54606c; border-right: 1px solid #e8ecf0; white-space: nowrap; }
th:first-child { padding-left: 3px; border-right: 0; }
td { height: 21px; padding: 0 0 0 7px; color: #6d6d6d; white-space: nowrap; }
.name { padding-left: 3px; color: #000; }
.name div { display: flex; align-items: center; gap: 4px; }
.name svg { width: 16px; height: 16px; }
.size { text-align: right; padding-right: 4px; }
.sel td { background: #cbe5fc; border-top: 1px solid #6baede; border-bottom: 1px solid #6baede; }
.sel td:first-child { border-left: 1px solid #6baede; }
.sel td:last-child { border-right: 1px solid #6baede; }
.vscroll { width: 17px; background: #f0f0f0; display: flex; flex-direction: column; align-items: center; padding: 4px 0 4px; }
.vscroll svg { width: 10px; height: 10px; }
.track { flex: 1; align-self: stretch; display: flex; flex-direction: column; justify-content: flex-end; padding: 0 1px 129px; }
.vthumb { height: 41px; background: #cdcdcd; }
.status { height: 24px; flex: none; display: flex; align-items: center; padding: 0 4px 0 14px; color: #3f4a55; }
.count { margin-right: 17px; }
.kb { margin-left: 6px; }
.views { margin-left: auto; display: flex; align-items: center; }
.views button { width: 22px; height: 23px; }
.views .on { background: #c4e8f8; border: 1px solid #58a8ca; }
.views svg { width: 16px; height: 16px; }
.info { height: 22px; flex: none; background: #f0f0f0; border-top: 1px solid #d7d7d7; display: flex; align-items: center; padding-left: 2px; }
.desc { flex: 1; overflow: hidden; white-space: nowrap; font-size: 11px; }
.isize { width: 89px; padding-left: 5px; border-left: 1px solid #d0d0d0; border-right: 1px solid #d0d0d0; }
.iloc { width: 138px; padding-left: 4px; display: flex; align-items: center; gap: 4px; }
.iloc svg { width: 16px; height: 16px; }
.grip { width: 10px; height: 10px; margin: 6px 4px 0 0; }

.menu { position: absolute; left: 362px; top: 26px; width: 252px; padding: 2px 2px 1px; background: linear-gradient(90deg, #f0f0f0 29px, #dedede 29px, #dedede 30px, #f0f0f0 30px); border: 1px solid #8f8f8f; box-shadow: 3px 3px 3px rgba(0, 0, 0, .55); }
.mgroup + .mgroup { margin-top: 3px; padding-top: 3px; border-top: 1px solid #d8d8d8; border-image: linear-gradient(90deg, transparent 28px, #d8d8d8 28px) 1; }
.menu button { width: 100%; height: 22px; justify-content: flex-start; text-align: left; color: #000; }
.mi { width: 32px; padding-left: 3px; }
.mi svg { width: 16px; height: 16px; }
.ml { flex: 1; white-space: nowrap; }
.menu .bold { font-weight: 700; }
.marrow { width: 6px; height: 8px; margin-right: 8px; }

.taskbar { height: 40px; flex: none; display: flex; background: linear-gradient(90deg, #a47a8e, #a78393 50%, #9d7990 85%, #a77891 99%, #a84f70); border-top: 1px solid #b99aa7; color: #fff; }
.start { width: 52px; padding-right: 5px; }
.start svg { width: 28px; height: 28px; }
.task { height: 38px; margin-top: 1px; }
.active { width: 58px; border: 1px solid #fff; background: #cdb3bd; margin-right: 3px; }
.active svg { width: 34px; height: 30px; }
.stack { width: 59px; border: 1px solid #cdb2bf; box-shadow: inset -4px 0 #b8949f, inset -5px 0 #d2b9c5; background: #b38f9d; padding-right: 6px; }
.stack svg { width: 30px; height: 30px; }
.tray { margin-left: auto; display: flex; align-items: center; gap: 7px; margin-right: 14px; }
.tray svg { width: 18px; height: 18px; }
.clock { display: flex; flex-direction: column; align-items: center; width: 55px; margin-right: 15px; padding-top: 4px; line-height: 17px; white-space: nowrap; }
</style>
